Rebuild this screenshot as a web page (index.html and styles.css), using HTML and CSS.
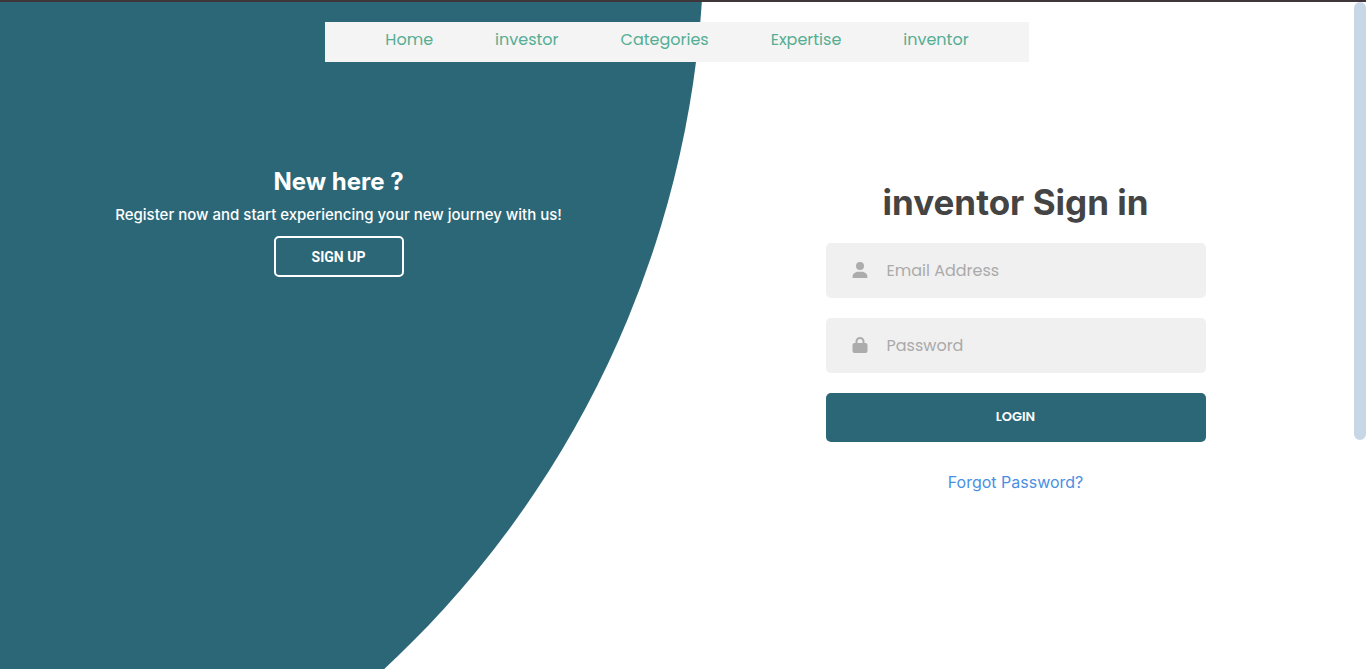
FILE: index.html
```html
<!DOCTYPE html>
<html lang="en">
<head>
  <meta charset="utf-8">
  <meta name="viewport" content="width=device-width, initial-scale=1">
  <title>inventor Sign in</title>
  <link rel="stylesheet" href="styles.css">
</head>
<body>
  <div class="page">
    <div class="circle"></div>
    <header class="header">
      <nav class="nav">
        <a href="#">Home</a>
        <a href="#">investor</a>
        <a href="#">Categories</a>
        <a href="#">Expertise</a>
        <a href="#">inventor</a>
      </nav>
    </header>
    <main class="panels">
      <section class="join">
        <h2 class="join-title">New here ?</h2>
        <p class="join-text">Register now and start experiencing your new journey with us!</p>
        <button class="join-button" type="button">SIGN UP</button>
      </section>
      <form class="signin">
        <h1 class="signin-title">inventor Sign in</h1>
        <label class="field">
          <svg class="field-icon" viewBox="0 0 16 16" aria-hidden="true"><circle cx="8" cy="4" r="4"/><path d="M0.500 15.200C0.500 12 3 9.700 6.200 9.700h3.600c3.200 0 5.700 2.300 5.700 5.500 0 .5-.4.800-.9.800H1.400c-.5 0-.9-.3-.9-.8z"/></svg>
          <input class="field-input" type="email" placeholder="Email Address" aria-label="Email Address">
        </label>
        <label class="field">
          <svg class="field-icon" viewBox="0 0 16 16" aria-hidden="true"><path fill-rule="evenodd" d="M3.500 6V4.500a4.500 4.500 0 0 1 9 0V6h1a2 2 0 0 1 2 2v6a2 2 0 0 1-2 2h-11a2 2 0 0 1-2-2V8a2 2 0 0 1 2-2zM5.500 6h5V4.500a2.500 2.500 0 0 0-5 0z"/></svg>
          <input class="field-input" type="password" placeholder="Password" aria-label="Password">
        </label>
        <button class="login" type="submit">LOGIN</button>
        <a class="forgot" href="#">Forgot Password?</a>
      </form>
    </main>
    <div class="scroll-thumb"></div>
  </div>
</body>
</html>
```
FILE: styles.css
```css
* {
  box-sizing: border-box;
  margin: 0;
  padding: 0;
}

body {
  background: #fff;
  font-family: Inter, "Liberation Sans", sans-serif;
}

.page {
  position: relative;
  min-height: 100vh;
  overflow: hidden;
  padding-right: 12px;
  border-top: 2px solid #3e3638;
}

.circle {
  position: absolute;
  top: -1066px;
  right: calc(48% + 6px);
  width: 2000px;
  height: 2000px;
  border-radius: 50%;
  background: #2c6777;
}

.header {
  position: relative;
  display: flex;
  justify-content: center;
  padding-top: 20px;
}

.nav {
  display: flex;
  gap: 62px;
  padding: 6px 60px 10px;
  background: #f4f4f4;
}

.nav a {
  color: #55ae93;
  font-family: Poppins, Inter, sans-serif;
  font-size: 16px;
  line-height: 24px;
  text-decoration: none;
}

.panels {
  position: relative;
  display: grid;
  grid-template-columns: 1fr 1fr;
}

.join {
  display: flex;
  flex-direction: column;
  align-items: center;
  padding-top: 105px;
  color: #fff;
  text-align: center;
}

.join-title {
  font-size: 24px;
  font-weight: 700;
  line-height: 30px;
}

.join-text {
  padding: 6px 0 9px;
  font-size: 15px;
  font-weight: 500;
  line-height: 24px;
}

.join-button {
  width: 130px;
  height: 41px;
  border: 2px solid #fff;
  border-radius: 5px;
  background: none;
  color: #fff;
  font-family: Roboto, sans-serif;
  font-size: 14px;
  font-weight: 700;
}

.signin {
  display: flex;
  flex-direction: column;
  align-items: center;
  gap: 20px;
  padding: 119px 20px 0;
}

.signin-title {
  color: #444;
  font-size: 35px;
  font-weight: 700;
  line-height: 42px;
}

.field {
  display: flex;
  align-items: center;
  gap: 19px;
  width: 100%;
  max-width: 380px;
  height: 55px;
  padding: 0 26px 2px;
  border-radius: 5px;
  background: #f0f0f0;
}

.field-icon {
  flex: none;
  width: 16px;
  height: 16px;
  fill: #acacac;
}

.field-input {
  flex: 1;
  min-width: 0;
  padding-top: 2px;
  border: 0;
  outline: 0;
  background: none;
  color: #333;
  font-family: Poppins, Inter, sans-serif;
  font-size: 16px;
  line-height: 24px;
}

.field-input::placeholder {
  color: #aaa;
}

.login {
  width: 100%;
  max-width: 380px;
  height: 49px;
  padding-bottom: 2px;
  border: 0;
  border-radius: 5px;
  background: #2c6777;
  color: #fff;
  font-family: Poppins, Inter, sans-serif;
  font-size: 13px;
  font-weight: 600;
}

.forgot {
  padding-top: 8px;
  color: #4a90e2;
  font-size: 16px;
  line-height: 24px;
  text-decoration: none;
}

.scroll-thumb {
  position: absolute;
  top: 0;
  right: 0;
  width: 12px;
  height: 438px;
  border-radius: 6px;
  background: #c8d7e6;
}
```
